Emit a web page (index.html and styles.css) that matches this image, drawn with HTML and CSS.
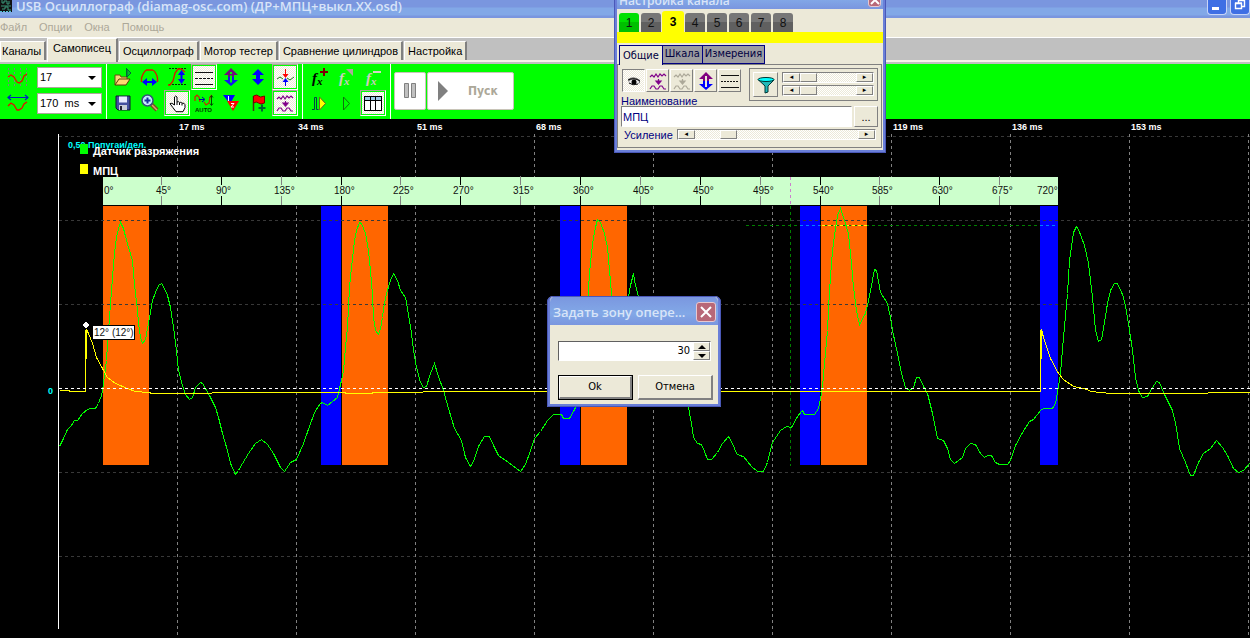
FILE: index.html
```html
<!DOCTYPE html>
<html lang="ru">
<head>
<meta charset="utf-8">
<title>USB Осциллограф</title>
<link rel="stylesheet" href="styles.css">
</head>
<body>
<main class="app">
  <header class="titlebar">
    <svg class="app-icon" width="13" height="12" viewBox="0 0 13 12"><rect width="12" height="12" fill="#111"/><path d="M2 0v3h2v-2h3v3h2V1M1 6h10M2 9h3V7h3v3h3" fill="none" stroke="#3a9a7a"/><path d="M0 11.500h12" stroke="#50c0d0" stroke-dasharray="2 1"/></svg>
    <h1 class="app-title">USB Осциллограф (diamag-osc.com) (ДР+МПЦ+выкл.XX.osd)</h1>
    <button class="win-btn" aria-label="Свернуть"><svg width="18" height="14" viewBox="0 0 18 14"><rect x="4" y="7" width="7" height="3" fill="#fff"/></svg></button>
    <button class="win-btn" aria-label="Развернуть"><svg width="18" height="14" viewBox="0 0 18 14" fill="none" stroke="#fff"><path d="M4.500 3.500h6v5h-6zM4 3h7M7.500 3V.5h6v6H11M7 0h7" stroke-width="1.400"/></svg></button>
  </header>

  <nav class="menu">
    <a href="#">Файл</a><a href="#">Опции</a><a href="#">Окна</a><a href="#">Помощь</a>
  </nav>

  <div class="tabs" role="tablist">
    <button role="tab" class="tab first">Каналы</button>
    <button role="tab" class="tab active" aria-selected="true">Самописец</button>
    <button role="tab" class="tab">Осциллограф</button>
    <button role="tab" class="tab">Мотор тестер</button>
    <button role="tab" class="tab">Сравнение цилиндров</button>
    <button role="tab" class="tab">Настройка</button>
  </div>

  <section class="toolbar">
    <div class="combos">
      <label for="time" class="combo-icon"><svg width="22" height="18" viewBox="0 0 22 18" fill="none"><path d="M1.500 0v18M7.500 0v18M13.500 0v18M19.500 0v18" stroke="#808080" stroke-dasharray="2 2"/><path d="M1 9l3-2 3 2 3 5 2 1 3-2 2-5 3-2" stroke="#e01000" stroke-width="1.300"/></svg></label>
      <span class="combo"><select id="time"><option>17</option></select><svg class="arrow" width="8" height="4" viewBox="0 0 8 4"><path d="M0 0h8L4 4z"/></svg></span>
      <label for="span" class="combo-icon"><svg width="22" height="18" viewBox="0 0 22 18" fill="none"><path d="M1 3.500h20M4 1L1 3.500 4 6M18 1l3 2.500L18 6" stroke="#0020c0" stroke-width="1.200"/><path d="M1 12l3-3 3 2 3 5h2l3-2 2-4 3-2" stroke="#e01000" stroke-width="1.300"/></svg></label>
      <span class="combo"><select id="span"><option>170&nbsp; ms</option></select><svg class="arrow" width="8" height="4" viewBox="0 0 8 4"><path d="M0 0h8L4 4z"/></svg></span>
    </div>

    <div class="tools seven">
      <button class="tool" aria-label="Открыть"><svg width="20" height="20" viewBox="0 0 20 20"><path d="M2 18V8h5l1 2h6v4" fill="#f8d878" stroke="#6b4a10"/><path d="M2 18l4-6h11l-4 6z" fill="#ffd870" stroke="#5a3b08"/><path d="M13.500 1v9" stroke="#063"/><path d="M14 2l4 4-4 4z" fill="#00c030" stroke="#063"/></svg></button>
      <button class="tool" aria-label="Период"><svg width="20" height="20" viewBox="0 0 20 20" fill="none"><path d="M1.500 15v-4c1-3 3-7 5-8h6c3 1 4 4 5 8v4" stroke="#e01000" stroke-width="1.300"/><path d="M4 15h12" stroke="#00f" stroke-width="2"/><path d="M7 11v8l-5-4zM12 11v8l5-4z" fill="#00f"/></svg></button>
      <button class="tool" aria-label="Амплитуда"><svg width="20" height="20" viewBox="0 0 20 20" fill="none"><path d="M2 1.500h17M2 17.500h17" stroke="#030" stroke-dasharray="2 1"/><path d="M1 18h2l3-4 2-8 3-4h3l4 3" stroke="#e01000" stroke-width="1.300"/><path d="M14.500 5v10" stroke="#00f" stroke-width="2"/><path d="M11 8h7l-3.500-5zM11 12h7l-3.500 5z" fill="#00f"/></svg></button>
      <button class="tool pressed" aria-label="Линии"><svg width="20" height="20" viewBox="0 0 20 20" fill="none" stroke="#111"><path d="M1 5.500h18M1 17.500h18"/><path d="M1 11.500h18" stroke-dasharray="3 1"/></svg></button>
      <button class="tool" aria-label="Сдвиг"><svg width="18" height="20" viewBox="0 0 18 20"><path d="M2 8l7-7 7 7h-4v4H6V8z" fill="#70107a"/><path d="M2 13l7 6 7-6h-4v-3H6v3z" fill="#1414f0"/><path d="M9 5v2M9 8.500v7" stroke="#0f0" stroke-width="2"/></svg></button>
      <button class="tool" aria-label="По вертикали"><svg width="16" height="20" viewBox="0 0 16 20"><path d="M2 8l6-6 6 6h-4v4h4l-6 6-6-6h4V8z" fill="#00f"/></svg></button>
      <button class="tool pressed" aria-label="Синхронизация"><svg width="20" height="20" viewBox="0 0 20 20" fill="none"><path d="M2 12l3-2 3 2M12 11l3 2 4-3" stroke="#207a20"/><path d="M10.500 2v5" stroke="red"/><path d="M7.500 7h6l-3 4z" fill="red"/><path d="M10.500 12v7" stroke="#00f"/><path d="M7.500 15h6l-3-4z" fill="#00f"/></svg></button>
      <button class="tool" aria-label="Сохранить"><svg width="16" height="16" viewBox="0 0 16 16"><path d="M1 1h14v14H3l-2-2z" fill="#4450a0" stroke="#101430"/><rect x="4" y="1.500" width="8" height="6" fill="#e8ecff"/><rect x="4" y="10" width="8" height="5" fill="#c8ccd8"/><rect x="5" y="11" width="2" height="4" fill="#223"/></svg></button>
      <button class="tool" aria-label="Масштаб"><svg width="20" height="20" viewBox="0 0 20 20"><path d="M11 11l6 6" stroke="#7a4a20" stroke-width="4"/><path d="M12 12l5 5" stroke="#d8a868" stroke-width="1.500"/><circle cx="7.500" cy="7.500" r="5.500" fill="#c8ecff" stroke="#38507a" stroke-width="1.500"/><path d="M7.500 4.500v6M4.500 7.500h6" stroke="#1830a0" stroke-width="2"/></svg></button>
      <button class="tool pressed" aria-label="Рука"><svg width="20" height="20" viewBox="0 0 20 20"><path d="M7.500 12V4q1-2 2.500 0v5q1.500-1 2.500.500 1.500-.8 2.500.7 2.500-.5 3 1.500v3l-2 4H9l-3-4-3-4q1.500-1.500 4.500 1.300z" fill="#fff" stroke="#000"/><path d="M10 9v3M12.500 10v2M15 10.500v2" stroke="#000"/></svg></button>
      <button class="tool" aria-label="Авто"><svg width="20" height="20" viewBox="0 0 20 20" fill="none"><path d="M1 8V4l2-2 2 2 1 5M10 9l2 3 3-2 1-6 2-2" stroke="#d02000" stroke-width="1.200"/><path d="M5 6.500h5M8 4l3 2.500L8 9" stroke="#00a"/><path d="M17.500 3v9M16 4.500l1.500-2 1.500 2M16 10.500l1.500 2 1.500-2" stroke="#040"/><text x="1" y="19" class="auto">AUTO</text></svg></button>
      <button class="tool" aria-label="Фильтр"><svg width="18" height="20" viewBox="0 0 18 20"><path d="M1 2h12l-5 9z" fill="#00f"/><path d="M5 8h12l-6 10z" fill="red"/><path d="M6.500 3v5M9 10.500h3l-3 3.500h3" stroke="#fff" fill="none"/></svg></button>
      <button class="tool" aria-label="Метка"><svg width="18" height="20" viewBox="0 0 18 20"><path d="M4.500 3v15" stroke="#431" stroke-width="1.500"/><path d="M4.500 3q4-2 5 0t6 0v7q-4 2-6 0t-5 0z" fill="#f00" stroke="#700"/><path d="M13 11.500v7M9.500 15h7" stroke="#063" stroke-width="2"/></svg></button>
      <button class="tool pressed" aria-label="Сглаживание"><svg width="20" height="20" viewBox="0 0 20 20" fill="none" stroke="#80008a" stroke-width="1.200"><path d="M2 6l2-2 2 2 2-3 2 3 2-3 2 2 2-2 2 2"/><path d="M8 10h5l-2.500 3z" fill="#80008a"/><path d="M10.500 8v3"/><path d="M2 18l2-3h2l2 3h2l2-3h2l2 3h2"/></svg></button>
    </div>

    <div class="tools three">
      <button class="tool" aria-label="Добавить функцию"><svg width="20" height="20" viewBox="0 0 20 20"><text x="3" y="16" class="fx">f</text><text x="8" y="18" class="fx small">x</text><path d="M15 1v8M11 5h8" stroke="#800000" stroke-width="2"/></svg></button>
      <button class="tool" aria-label="Изменить функцию" disabled><svg width="20" height="20" viewBox="0 0 20 20"><text x="3" y="16" class="fx off">f</text><text x="8" y="18" class="fx small off">x</text><path d="M10 2h7v7z" fill="#aca899"/></svg></button>
      <button class="tool" aria-label="Удалить функцию" disabled><svg width="20" height="20" viewBox="0 0 20 20"><text x="3" y="16" class="fx off">f</text><text x="8" y="18" class="fx small off">x</text><path d="M10 5h8" stroke="#d8d4c8" stroke-width="2"/></svg></button>
      <button class="tool" aria-label="Шаг"><svg width="20" height="20" viewBox="0 0 20 20"><path d="M3 16.500h2.500v-12h2v12h2" fill="none" stroke="#044"/><path d="M10.500 4v13l6-6.500z" fill="#ff0" stroke="#662"/></svg></button>
      <button class="tool" aria-label="Воспроизвести"><svg width="20" height="20" viewBox="0 0 20 20"><path d="M7.500 4v13l6-6.500z" fill="none" stroke="#107010"/></svg></button>
      <button class="tool pressed" aria-label="Таблица"><svg width="20" height="20" viewBox="0 0 20 20"><rect x="1.500" y="3.500" width="17" height="14" fill="#fff" stroke="#000"/><path d="M2 4h16v3H2z" fill="#a0c8e8"/><path d="M1 7.500h18M7.500 4v13M12.500 4v13" stroke="#000"/></svg></button>
    </div>

    <div class="run">
      <button class="run-btn pause" aria-label="Пауза"><svg width="12" height="16" viewBox="0 0 12 16" fill="#c0c0c0" stroke="#808080"><path d="M.5.500h4v14h-4zM7.500.500h4v14h-4z"/></svg></button>
      <button class="run-btn start"><svg width="10" height="20" viewBox="0 0 10 20"><path d="M0 0l10 10L0 20z" fill="#808080"/></svg><span>Пуск</span></button>
    </div>
  </section>

  <section class="chart" aria-label="Осциллограмма">
    <svg class="plot" width="100%" height="100%">
      <g transform="translate(0 -119)">
        <g fill="#f60"><path d="M103 206h46v259h-46zM342 206h46v259h-46zM581 206h46v259h-46zM821 206h46v259h-46z"/></g>
        <path fill="#00f" d="M321 206h20v259h-20zM560 206h20v259h-20zM800 206h20v259h-20zM1040 206h18v259h-18z"/>
        <g class="grid-h">
          <line x1="59" x2="100%" y1="136.500" y2="136.500"/><line x1="59" x2="100%" y1="220.500" y2="220.500"/><line x1="59" x2="100%" y1="304.500" y2="304.500"/><line x1="59" x2="100%" y1="472.500" y2="472.500"/><line x1="59" x2="100%" y1="556.500" y2="556.500"/>
        </g>
        <path class="grid-v" d="M177.500 134v501M296.500 134v501M415.500 134v501M534.500 134v501M653.500 134v501M772.500 134v501M891.500 134v501M1010.500 134v501M1129.500 134v501M1248.500 134v501"/>
        <path class="axis" d="M58.500 134v495"/>
        <path d="M746 225.500h312M790.500 206v260" class="cursor"/>
        <path d="M800 225.500h20M1040 225.500h18" stroke="#0080ff" stroke-dasharray="3 3"/>
        <path d="M822 225.500h45" stroke="#ff0" stroke-dasharray="3 3"/>

        <g transform="translate(.5 .5)">
        <polyline class="trace green" points="59,446 63,438 67,429 71,425 74,420 77,420 82,413 87,409 90,408 95,408 98,403 101,395 102,390 104,375 106,360 107,343 109,317 111,290 112,277 114,253 116,237 118,228 120,222 123,228 125,236 128,247 132,260 133,273 135,293 137,310 138,323 140,337 142,343 145,339 147,328 149,317 152,300 155,292 158,285 161,283 163,286 167,295 170,307 173,327 176,350 178,370 182,385 185,394 189,399 192,397 195,387 200,382 202,383 205,388 210,397 215,407 218,417 222,433 227,450 230,463 235,474 238,470 242,463 248,453 255,443 261,439 267,444 273,453 280,467 284,471 290,462 296,459 303,443 310,423 315,410 320,403 322,402 327,405 332,401 337,397 339,388 341,380 343,370 345,347 347,327 348,307 349,287 351,267 354,240 356,230 359,222 361,223 365,233 368,250 370,270 372,295 373,317 375,330 378,334 380,328 382,317 383,308 386,293 390,280 393,273 397,280 400,290 405,297 407,308 411,333 413,350 416,367 420,382 423,387 426,386 430,373 434,363 437,373 443,390 448,408 454,428 461,440 465,457 470,466 473,461 478,446 484,436 489,436 493,445 498,455 508,462 520,471 525,464 530,450 534,438 540,431 547,420 553,414 561,414 563,418 569,418 573,411 576,405 581,380 584,345 587,305 589,273 591,253 593,237 595,227 597,219 600,222 604,233 607,247 609,270 611,293 614,325 618,342 623,330 628,296 630,285 633,273 635,285 638,296 646,310 652,350 660,385 668,375 678,380 688,407 691,423 693,437 697,443 701,444 704,451 707,459 711,459 717,452 722,443 728,436 732,443 736,453 739,455 743,456 751,466 757,471 763,471 767,462 772,442 780,430 786,426 791,427 797,416 802,410 804,414 814,414 818,408 820,398 822,387 824,363 827,330 829,290 832,250 835,228 837,215 840,208 844,220 848,233 851,263 853,287 856,310 859,324 865,313 868,300 871,285 874,269 876,270 880,292 887,303 890,317 892,330 897,353 901,373 905,387 909,390 913,387 916,377 919,377 923,386 927,393 932,413 937,438 943,440 947,448 950,459 954,463 962,457 965,448 970,443 975,444 980,453 984,457 987,455 991,455 995,462 999,464 1007,464 1010,460 1015,445 1022,432 1029,421 1033,419 1040,410 1043,408 1052,408 1055,403 1057,392 1060,373 1063,337 1067,293 1069,260 1073,232 1076,226 1078,229 1084,245 1088,263 1092,297 1095,330 1098,341 1101,339 1103,328 1107,303 1110,290 1114,283 1117,283 1122,294 1125,305 1128,323 1132,350 1135,377 1138,390 1142,397 1147,396 1152,387 1156,381 1159,382 1163,392 1172,410 1175,422 1179,448 1185,462 1190,475 1193,475 1198,462 1203,453 1210,448 1216,440 1222,447 1227,455 1233,468 1238,472 1243,470 1249,463"/>
        <polyline class="trace yellow" points="59,390 68,390 70,391 85,391 86,329 88,333 92,343 96,357 102,368 107,377 115,383 127,388 135,391 147,392 153,393 210,393 213,392 344,392 346,393 371,393 373,392 415,392 430,391 1040,391 1041,329 1043,337 1050,358 1058,373 1063,379 1073,386 1087,389 1090,391 1100,392 1110,393 1165,393 1250,392"/>
        </g>
        <path d="M85.500 330v61M1040.500 330v61" stroke="#ff0"/>
        <line x1="59" x2="100%" y1="388.500" y2="388.500" class="zero"/>
        <path d="M86 321.500l3.500 3.500-3.500 3.500-3.500-3.500z" fill="#fff"/>

        <rect x="103" y="177" width="955" height="28" fill="#cfc"/>
        <path d="M161.500 176v9m0 11v9M281.500 176v9m0 11v9M400.500 176v9m0 11v9M520.500 176v9m0 11v9M640.500 176v9m0 11v9M760.500 176v9m0 11v9M879.500 176v9m0 11v9M999.500 176v9m0 11v9" stroke="#808080"/>
        <path d="M221.500 177v8m0 11v9M341.500 177v8m0 11v9M460.500 177v8m0 11v9M580.500 177v8m0 11v9M700.500 177v8m0 11v9M820.500 177v8m0 11v9M939.500 177v8m0 11v9" stroke="#000"/>
        <path d="M790.500 177v28" stroke="#cc7fcc" stroke-dasharray="3 3"/>
        <g class="degrees">
          <text x="104" y="194">0°</text><text x="156" y="194">45°</text><text x="216" y="194">90°</text><text x="274" y="194">135°</text><text x="334" y="194">180°</text><text x="393" y="194">225°</text><text x="453" y="194">270°</text><text x="513" y="194">315°</text><text x="573" y="194">360°</text><text x="633" y="194">405°</text><text x="693" y="194">450°</text><text x="753" y="194">495°</text><text x="813" y="194">540°</text><text x="872" y="194">585°</text><text x="932" y="194">630°</text><text x="992" y="194">675°</text><text x="1037" y="194">720°</text>
        </g>
        <g class="times">
          <text x="179" y="130">17 ms</text><text x="298" y="130">34 ms</text><text x="417" y="130">51 ms</text><text x="536" y="130">68 ms</text><text x="893" y="130">119 ms</text><text x="1012" y="130">136 ms</text><text x="1131" y="130">153 ms</text>
        </g>
        <text x="68" y="148" class="scale">0,50 Попугаи/дел.</text>
        <text x="48" y="394" class="scale">0</text>
        <path d="M80 144h8v10h-8z" fill="#0f0"/><path d="M80 164h8v10h-8z" fill="#ff0"/>
        <text x="93" y="155" class="legend">Датчик разряжения</text>
        <text x="93" y="175" class="legend">МПЦ</text>
        <rect x="92.500" y="325.500" width="42" height="14" fill="#fff" stroke="#000"/>
        <text x="94" y="336" class="hint">12° (12°)</text>
      </g>
    </svg>
  </section>

  <section class="window channel" aria-label="Настройка канала">
    <header class="win-title"><h2>Настройка канала</h2><button class="close" aria-label="Закрыть"><svg width="10" height="10" viewBox="0 0 10 10"><path d="M1 1l8 8M9 1L1 9" stroke="#fff" stroke-width="2"/></svg></button></header>
    <div class="win-body">
      <div class="channels" role="tablist">
        <button class="ch on">1</button><button class="ch">2</button><button class="ch current">3</button><button class="ch">4</button><button class="ch">5</button><button class="ch">6</button><button class="ch">7</button><button class="ch">8</button>
      </div>
      <div class="subtabs" role="tablist">
        <button class="subtab current">Общие</button><button class="subtab">Шкала</button><button class="subtab">Измерения</button>
      </div>
      <div class="panel">
        <div class="options">
          <div class="opts">
            <button class="opt down" aria-label="Видимость"><svg width="18" height="18" viewBox="0 0 18 18"><path d="M3 7q6-4 12 1v3q-6 4-11 0z" fill="#777"/><ellipse cx="9" cy="10" rx="5" ry="2.500" fill="#eee"/><circle cx="9" cy="10" r="2.500"/><path d="M3 8q6-3 12 1M4 11q4 3 9 1" fill="none" stroke="#111"/></svg></button>
            <button class="opt" aria-label="Сглаживание"><svg width="20" height="20" viewBox="0 0 20 20" fill="none" stroke="#80008a" stroke-width="1.200"><path d="M2 6l2-2 2 2 2-3 2 3 2-3 2 2 2-2 2 2"/><path d="M8 10h5l-2.500 3z" fill="#80008a"/><path d="M10.500 8v3"/><path d="M2 18l2-3h2l2 3h2l2-3h2l2 3h2"/></svg></button>
            <button class="opt" aria-label="Без сглаживания" disabled><svg width="20" height="20" viewBox="0 0 20 20" fill="none" stroke="#aca899" stroke-width="1.200"><path d="M2 6l2-2 2 2 2-3 2 3 2-3 2 2 2-2 2 2"/><path d="M8 10h5l-2.500 3z" fill="#aca899"/><path d="M10.500 8v3"/><path d="M2 18l2-3h2l2 3h2l2-3h2l2 3h2"/></svg></button>
            <button class="opt" aria-label="Сдвиг"><svg width="18" height="20" viewBox="0 0 18 20"><path d="M2 8l7-7 7 7h-4v3H6V8z" fill="#800080"/><path d="M2 13l7 6 7-6h-4v-3H6v3z" fill="#00f"/><path d="M9 5v11" stroke="#ece9d8" stroke-width="2"/></svg></button>
            <button class="opt" aria-label="Линии"><svg width="20" height="20" viewBox="0 0 20 20" fill="none" stroke="#111"><path d="M1 4.500h18M1 16.500h18"/><path d="M1 10.500h18" stroke-dasharray="2 1"/></svg></button>
          </div>
          <div class="filter">
            <button class="opt funnel-btn" aria-label="Фильтр"><svg width="18" height="20" viewBox="0 0 18 20"><path d="M1.500 5L8 11v7l3-1v-6l6-6z" fill="#20b8b8" stroke="#033"/><ellipse cx="9" cy="4.500" rx="8" ry="2" fill="#0ff" stroke="#033"/></svg></button>
            <div class="filter-bars">
              <div class="scroll"><button class="sb" aria-label="Меньше">◂</button><input type="range" value="0" aria-label="Нижняя частота"><button class="sb" aria-label="Больше">▸</button></div>
              <div class="scroll"><button class="sb" aria-label="Меньше">◂</button><input type="range" value="0" aria-label="Верхняя частота"><button class="sb" aria-label="Больше">▸</button></div>
            </div>
          </div>
        </div>
        <label for="name" class="name-label">Наименование</label>
        <div class="name-row"><input id="name" class="field" type="text" value="МПЦ"><button class="more" aria-label="Выбрать">...</button></div>
        <div class="gain-row"><label for="gain">Усиление</label><div class="scroll"><button class="sb" aria-label="Меньше">◂</button><input id="gain" type="range" value="17"><button class="sb" aria-label="Больше">▸</button></div></div>
      </div>
    </div>
  </section>

  <section class="window dialog" role="dialog" aria-label="Задать зону опережения">
    <header class="win-title"><h2>Задать зону опере...</h2><button class="close" aria-label="Закрыть"><svg width="12" height="12" viewBox="0 0 12 12"><path d="M1 1l10 10M11 1L1 11" stroke="#fff" stroke-width="2"/></svg></button></header>
    <div class="dialog-body">
      <div class="spin"><input type="text" value="30" aria-label="Зона, градусы"><div class="spin-btns"><button aria-label="Увеличить"><svg width="8" height="4" viewBox="0 0 8 4"><path d="M0 4h8L4 0z"/></svg></button><button aria-label="Уменьшить"><svg width="8" height="4" viewBox="0 0 8 4"><path d="M0 0h8L4 4z"/></svg></button></div></div>
      <div class="actions"><button class="btn default">Ok</button><button class="btn">Отмена</button></div>
    </div>
  </section>
</main>
</body>
</html>
```

FILE: styles.css
```css
* { box-sizing: border-box; }

:root {
  --face: #ece9d8;
  --ui: "DejaVu Sans Condensed", "Liberation Sans", sans-serif;
  --sans: "Liberation Sans", Arial, sans-serif;
  --title: "Open Sans", "Noto Sans", sans-serif;
  --dither: repeating-conic-gradient(#fff 0 25%, #ece9d8 0 50%) 0 0 / 2px 2px;
}

body { margin: 0; background: #000; font: 11px/14px var(--sans); }
button, input, select { font: inherit; color: inherit; margin: 0; padding: 0; border: 0; border-radius: 0; background: none; }
h1, h2 { margin: 0; font-family: var(--title); font-weight: 600; color: #d8e4f8; white-space: nowrap; }
svg { display: block; flex: none; }

.app { position: relative; display: flex; flex-direction: column; height: 100vh; overflow: hidden; }

/* title bar */
.titlebar { display: flex; align-items: flex-start; gap: 3px; height: 18px; flex: none; overflow: hidden; background: linear-gradient(#7a96df 0 7px, #82a8e7 8px 15px, #7a96df 16px); }
.app-title { flex: 1; font-size: 13px; line-height: 12px; }
.win-btn { width: 20px; height: 15px; border: 1px solid #c8d4f8; border-top: 0; border-radius: 0 0 4px 4px; background: #3f6fe4; }

.menu { display: flex; gap: 12px; height: 20px; flex: none; padding-top: 2px; background: var(--face); border-bottom: 1px solid #fff; }
.menu a { color: #aca899; text-decoration: none; }

/* main tabs */
.tabs { display: flex; align-items: flex-end; height: 26px; flex: none; gap: 1px; padding-bottom: 4px; background: #c0c0c0; box-shadow: inset 0 -2px #c0c0c0, inset 0 -4px #f4f2ea; }
.tab { height: 19px; padding: 0 3px; background: var(--face); border-top: 1px solid #fff; border-left: 1px solid #fff; border-right: 2px solid #808080; white-space: nowrap; }
.tab.first { padding-left: 1px; }
.tab.active { height: 24px; margin-bottom: -2px; padding: 0 5px 5px; }

/* toolbar */
.toolbar { display: flex; height: 55px; flex: none; background: #0f0; }
.combos { display: grid; grid-template-columns: 23px 65px; gap: 5px 7px; align-content: start; padding: 3px 4px 0 7px; }
.combo-icon { padding-top: 1px; }
.combo { position: relative; display: block; height: 21px; border: 1px solid #aca899; background: #fff; }
.combo select { width: 100%; height: 19px; padding: 0 2px 1px; appearance: none; }
.arrow { position: absolute; right: 5px; top: 8px; pointer-events: none; }
.tools { display: grid; grid-auto-rows: 26px; border-left: 1px solid #fff; padding-left: 3px; padding-right: 3px; }
.seven { grid-template-columns: repeat(7, 27px); }
.three { grid-template-columns: repeat(3, 27px); }
.tool { display: flex; align-items: center; justify-content: center; width: 26px; height: 26px; }
.pressed { border: 1px solid #fff; border-top-color: #aca899; border-left-color: #aca899; background: var(--dither); outline: 1px solid #0f0; outline-offset: -2px; }
.auto { font: bold 6px/6px var(--sans); fill: #030; }
.fx { font: italic bold 15px/16px "Liberation Serif", serif; }
.fx.small { font-size: 11px; }
.off { fill: #d0ccc0; }
.run { display: flex; gap: 1px; padding: 8px 3px; border-left: 1px solid #fff; }
.run-btn { display: flex; align-items: center; height: 38px; background: #fff; border: 1px solid #c8c4b8; border-radius: 2px; }
.pause { width: 32px; justify-content: center; }
.start { width: 87px; gap: 20px; padding-left: 10px; font: bold 12px/14px "DejaVu Sans Condensed", sans-serif; color: #aca899; }

/* chart */
.chart { flex: 1; min-height: 0; background: #000; }
.plot { shape-rendering: crispEdges; }
.grid-h { stroke: #383838; stroke-dasharray: 3 3; }
.grid-v { stroke: #808080; stroke-dasharray: 3 3; }
.axis { stroke: #fff; }
.cursor { stroke: #008000; stroke-dasharray: 3 3; }
.trace { fill: none; stroke-width: 1px; }
.green { stroke: #0f0; }
.yellow { stroke: #ff0; }
.zero { stroke: #fff; stroke-dasharray: 3 3; }
.degrees, .hint { font: 10px/12px var(--sans); fill: #111; }
.times { font: bold 9px/12px var(--sans); fill: #fff; }
.scale { font: bold 9px/12px var(--sans); fill: #0ff; }
.legend { font: bold 11px/12px var(--sans); fill: #fff; }

/* windows */
.window { position: absolute; border: 3px solid #6a7fd8; border-top: 0; outline: 1px solid #4a58b8; outline-offset: -1px; background: var(--face); }
.win-title { display: flex; justify-content: space-between; background: linear-gradient(#7a96df, #82a8e7 60%, #7a96df); }
.close { display: flex; align-items: center; justify-content: center; border: 1px solid #e8c8d0; border-radius: 3px; background: #b86878; }

.channel { left: 614px; top: -15px; width: 272px; }
.channel .win-title { height: 24px; padding: 0 2px; }
.channel h2 { font-size: 12px; line-height: 32px; }
.channel .close { width: 13px; height: 14px; margin-top: 8px; }
.channels { display: flex; align-items: flex-end; gap: 2px; height: 34px; padding-left: 2px; border-bottom: 11px solid #ff0; font-size: 12px; }
.ch { width: 20px; height: 19px; background: linear-gradient(#777 50%, #606060 50%); border-radius: 3px 3px 0 0; color: #111; }
.ch.on { background: linear-gradient(#00e000 50%, #00c000 50%); }
.ch.current { width: 22px; height: 21px; margin: 0 -1px; background: #ff0; font-weight: bold; color: #000; }
.subtabs { display: flex; align-items: flex-end; height: 21px; padding: 0 2px; color: #000040; }
.subtab { height: 19px; padding: 0 2px 1px; margin-right: -1px; border: 1px solid #000080; background: #9c9ca0; font: 11px/14px var(--ui); }
.subtab.current { height: 20px; padding: 0 3px; margin-bottom: -1px; border-bottom: 0; background: var(--face); }
.panel { border: 1px solid #808080; margin: 0 1px 2px 0; padding: 3px 3px 6px; color: #000080; }
.options { display: flex; justify-content: space-between; height: 28px; }
.opts { display: flex; gap: 1px; padding: 1px; }
.opt { display: flex; align-items: center; justify-content: center; width: 23px; height: 23px; border: 1px solid #fff; border-right-color: #808080; border-bottom-color: #808080; }
.opt.down { border-color: #808080 #fff #fff #808080; background: var(--dither); }
.filter { display: flex; gap: 4px; width: 129px; height: 33px; padding: 3px; border: 1px solid #808080; }
.funnel-btn { width: 25px; height: 25px; }
.filter-bars { display: flex; flex-direction: column; gap: 2px; flex: 1; min-width: 0; }
.scroll { display: flex; flex: 1; height: 11px; max-height: 11px; min-width: 0; border: 1px solid #808080; border-right-color: #fff; border-bottom-color: #fff; background: var(--dither); }
.scroll input { flex: 1; width: 0; min-width: 0; height: 9px; appearance: none; background: none; }
.scroll input::-webkit-slider-thumb { appearance: none; width: 17px; height: 9px; background: var(--face); border: 1px solid #fff; border-right-color: #808080; border-bottom-color: #808080; }
.sb { flex: none; width: 17px; height: 9px; font: 7px/7px "DejaVu Sans", sans-serif; color: #000; background: var(--face); border: 1px solid #fff; border-right-color: #808080; border-bottom-color: #808080; }
.name-label { display: block; line-height: 10px; }
.name-row { display: flex; gap: 2px; height: 21px; }
.field { flex: 1; min-width: 0; padding: 0 1px; background: #fff; border: 1px solid #808080; border-right-color: #fff; border-bottom-color: #fff; }
.more { width: 24px; color: #000; border: 1px solid #fff; border-right-color: #808080; border-bottom-color: #808080; }
.gain-row { display: flex; gap: 4px; padding: 2px 2px 0 3px; line-height: 12px; }

.dialog { left: 547px; top: 296px; width: 174px; border-radius: 6px 6px 0 0; }
.dialog .win-title { height: 29px; align-items: center; padding: 3px 2px 0 3px; border-radius: 6px 6px 0 0; }
.dialog h2 { font-size: 13px; line-height: 18px; }
.dialog .close { width: 20px; height: 20px; }
.dialog-body { display: grid; gap: 14px; padding: 16px 5px 4px 8px; font: 11px/14px var(--ui); }
.spin { display: flex; height: 20px; margin-right: 2px; border: 1px solid #606060; border-right-color: #fff; border-bottom-color: #fff; background: #fff; }
.spin input { flex: 1; min-width: 0; padding-right: 3px; text-align: right; }
.spin-btns { display: grid; grid-template-rows: 1fr 1fr; width: 17px; }
.spin-btns button { display: grid; place-items: center; background: var(--face); border: 1px solid #fff; border-right-color: #808080; border-bottom-color: #808080; }
.actions { display: grid; grid-template-columns: 1fr 1fr; gap: 5px; }
.btn { height: 25px; border: 1px solid #fff; border-right: 2px solid #808080; border-bottom: 2px solid #808080; }
.btn.default { outline: 1px solid #000; margin: 1px; height: 23px; }
```
